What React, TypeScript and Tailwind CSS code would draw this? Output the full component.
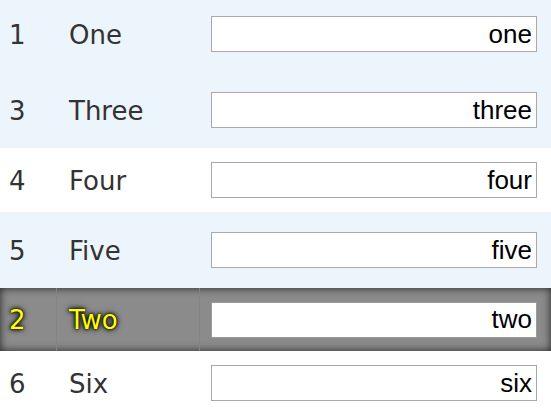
import React from 'react';

type Row = { id: number; label: string; value: string; h: string; dragging?: boolean };

const rows: Row[] = [
    { id: 1, label: 'One', value: 'one', h: 'h-[72px] pb-[4px]' },
    { id: 3, label: 'Three', value: 'three', h: 'h-[76px]' },
    { id: 4, label: 'Four', value: 'four', h: 'h-[64px]' },
    { id: 5, label: 'Five', value: 'five', h: 'h-[76px]' },
    { id: 2, label: 'Two', value: 'two', h: 'h-[63px]', dragging: true },
    { id: 6, label: 'Six', value: 'six', h: 'h-[64px]' },
];

const App: React.FC = () => {
    return (
        <div className="w-[551px] h-[410px] overflow-hidden bg-white font-['DejaVu_Sans',sans-serif] text-[#333]">
            {rows.map((row) => {
                const odd = row.id % 2 === 1;
                if (row.dragging) {
                    return (
                        <div
                            key={row.id}
                            className={`${row.h} grid grid-cols-[57px_143px_1fr] items-stretch bg-[#8b8b8b] shadow-[inset_0_0_9px_rgba(0,0,0,0.75)] text-[#ffff00] [text-shadow:0_0_2px_#000,0_0_4px_#000,0_0_6px_#000]`}
                        >
                            <div className="flex items-center pl-[9px] pt-[2px] text-[26px] border-r border-[#838383]">{row.id}</div>
                            <div className="flex items-center pl-[12px] pt-[2px] text-[26px] border-r border-[#838383]">{row.label}</div>
                            <div className="flex items-center pl-[11px] pr-[14px]">
                                <input
                                    readOnly
                                    value={row.value}
                                    className="w-full h-[36px] bg-white border border-[#9a9a9a] text-right pr-[4px] text-[26px] text-black font-['Liberation_Sans',Arial,sans-serif] outline-none [text-shadow:none]"
                                />
                            </div>
                        </div>
                    );
                }
                return (
                    <div
                        key={row.id}
                        className={`${row.h} grid grid-cols-[57px_143px_1fr] items-center ${odd ? 'bg-[#ecf4fc]' : 'bg-white'}`}
                    >
                        <div className="pl-[9px] pt-[2px] text-[26px]">{row.id}</div>
                        <div className="pl-[12px] pt-[2px] text-[26px]">{row.label}</div>
                        <div className="pl-[11px] pr-[14px]">
                            <input
                                readOnly
                                value={row.value}
                                className="w-full h-[36px] bg-white border border-[#a9a9a9] text-right pr-[4px] text-[26px] text-black font-['Liberation_Sans',Arial,sans-serif] outline-none"
                            />
                        </div>
                    </div>
                );
            })}
        </div>
    );
};

export default App;
